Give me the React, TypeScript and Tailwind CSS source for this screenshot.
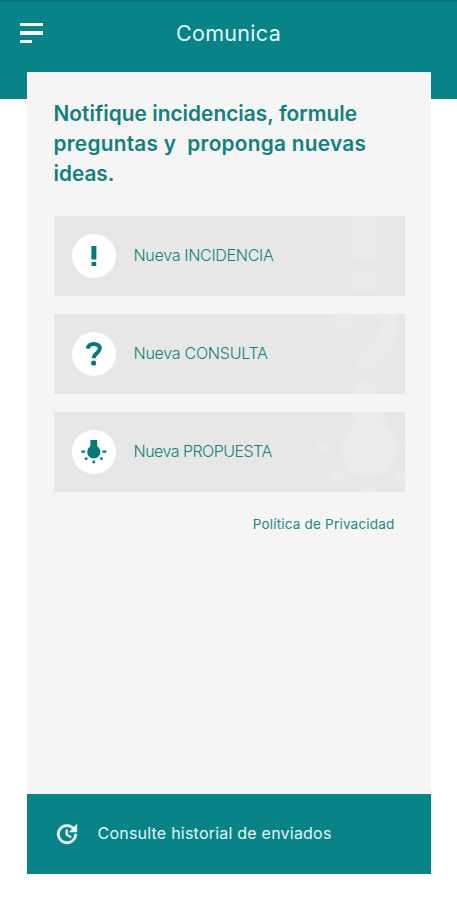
import type { ReactNode } from "react";

function ExclamationIcon({ className }: { className: string }) {
  return (
    <svg viewBox="0 0 44 44" className={className} fill="currentColor" aria-hidden="true">
      <path d="M19.400 12h5v13.500h-5zM19.600 28h4.600v4h-4.600z" />
    </svg>
  );
}

function QuestionIcon({ className }: { className: string }) {
  return (
    <svg viewBox="0 0 44 44" className={className} fill="none" aria-hidden="true">
      <path
        d="M15.600 16.600C16.400 13.300 18.900 11.900 21.700 11.900c3.600 0 6.100 1.700 6.100 4.600 0 4.300-6 4.700-6 9.800"
        stroke="currentColor"
        strokeWidth="4"
      />
      <circle cx="21.600" cy="31" r="2.600" fill="currentColor" />
    </svg>
  );
}

function BulbIcon({ className }: { className: string }) {
  return (
    <svg viewBox="0 0 44 44" className={className} fill="currentColor" aria-hidden="true">
      <path d="M18.400 10h6.800v6.300a6.600 6.600 0 1 1-6.800 0z" />
      <path d="M9.300 20.600h3.900v2.200H9.300zM30.400 20.600h3.900v2.200h-3.900z" />
      <path d="M20.500 30.600h2.600v2.600h-2.600zM12.400 28.800l1.900-1.900 1.700 1.700-1.900 1.900zM31.200 28.800l-1.900-1.900-1.700 1.700 1.900 1.900z" />
    </svg>
  );
}

function Option({ icon, mark, children }: { icon: ReactNode; mark: ReactNode; children: ReactNode }) {
  return (
    <button className="relative flex h-20 w-full items-center overflow-hidden bg-[#e7e7e7] pl-[18px] text-left">
      {mark}
      <span className="flex size-11 shrink-0 items-center justify-center rounded-full bg-white text-[#08797b]">
        {icon}
      </span>
      <span className="ml-[18px] pb-0.5 text-base font-light whitespace-nowrap text-[#137f80]">{children}</span>
    </button>
  );
}

export default function App() {
  return (
    <main className="h-[900px] w-[457px] overflow-hidden bg-white font-[Inter,sans-serif]">
      <header className="h-[99px] border-t-2 border-[#087279] bg-[#088489] text-[#e4f7f5]">
        <div className="grid h-[62px] grid-cols-[1fr_auto_1fr] items-center">
          <button className="ml-5 flex w-6 flex-col gap-[5px]" aria-label="Menú">
            <span className="h-[3.500px] w-[23px] bg-[#effaf9]" />
            <span className="h-[3.500px] w-[23px] bg-[#effaf9]" />
            <span className="h-[3.500px] w-3 bg-[#effaf9]" />
          </button>
          <h1 className="pt-px text-[21.500px] tracking-[0.3px]">Comunica</h1>
        </div>
      </header>
      <section className="relative mx-auto -mt-[27px] flex h-[802px] w-[404px] flex-col bg-[#f5f5f5]">
        <div className="flex-1 px-[27px] pt-[27px]">
          <h2 className="text-[20.800px] leading-[30px] font-semibold text-[#137f80]">
            <span className="block tracking-[0.05px] whitespace-pre">Notifique incidencias, formule</span>
            <span className="block tracking-[0.27px] whitespace-pre">preguntas y  proponga nuevas</span>
            <span className="block">ideas.</span>
          </h2>
          <div className="mt-[27px] flex w-[351px] flex-col gap-[18px]">
            <Option
              icon={<ExclamationIcon className="size-11" />}
              mark={<ExclamationIcon className="absolute -top-[76px] right-[-64px] size-[208px] text-[#eaeaea] blur-[2px]" />}
            >
              <span className="tracking-[-0.29px]">Nueva INCIDENCIA</span>
            </Option>
            <Option
              icon={<QuestionIcon className="size-11" />}
              mark={<QuestionIcon className="absolute -top-[56px] right-[-54px] size-[186px] text-[#eaeaea] blur-[3px]" />}
            >
              <span className="tracking-[-0.25px]">Nueva CONSULTA</span>
            </Option>
            <Option
              icon={<BulbIcon className="size-11" />}
              mark={<BulbIcon className="absolute -top-[56px] right-[-58px] size-[186px] text-[#ebebeb] blur-[3px]" />}
            >
              <span className="tracking-[-0.52px]">Nueva PROPUESTA</span>
            </Option>
          </div>
          <a className="mt-[22px] mr-[9px] block text-right text-[13.500px] leading-5 tracking-[0.2px] text-[#218889]">
            Política de Privacidad
          </a>
        </div>
        <footer className="flex h-20 items-center bg-[#088489] pl-[27px] text-[#e4f7f5]">
          <svg
            viewBox="0 0 24 24"
            className="size-[26px] text-[#effaf9]"
            fill="currentColor"
            stroke="currentColor"
            strokeWidth="0.600"
            aria-hidden="true"
          >
            <path d="M21 10.120h-6.780l2.740-2.820c-2.730-2.700-7.150-2.800-9.880-.1-2.730 2.710-2.730 7.080 0 9.790s7.150 2.710 9.880 0C18.320 15.650 19 14.080 19 12.100h2c0 1.980-.88 4.550-2.640 6.290-3.510 3.480-9.210 3.480-12.720 0-3.500-3.470-3.530-9.110-.02-12.580s9.140-3.470 12.650 0L21 3v7.120zM12.500 8v4.250l3.500 2.080-.72 1.210L11 13V8h1.500z" />
          </svg>
          <span className="ml-[18px] pb-0.5 text-[16px] tracking-[0.22px] whitespace-nowrap">Consulte historial de enviados</span>
        </footer>
      </section>
    </main>
  );
}
